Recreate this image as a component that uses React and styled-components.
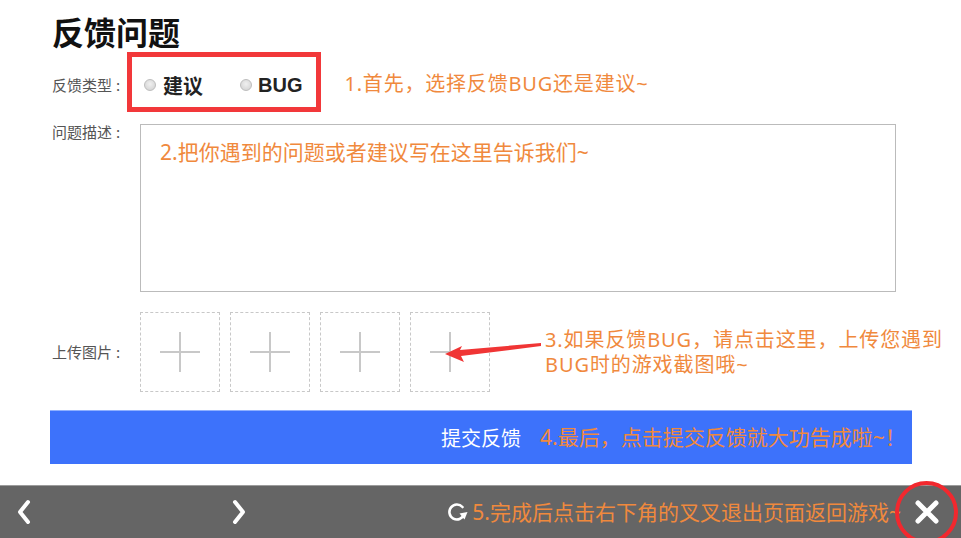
import React from 'react';
import styled, { createGlobalStyle } from 'styled-components';

const GlobalStyle = createGlobalStyle`
  body {
    margin: 0;
    background: #fff;
    font-family: "Noto Sans", "Noto Sans CJK SC", sans-serif;
  }
`;

const ORANGE = '#f0893d';

const Page = styled.div`
  width: 961px;
  height: 538px;
  display: flex;
  flex-direction: column;
  overflow: hidden;
`;

const Content = styled.div`
  padding: 13px 49px 0 52px;
  display: flex;
  flex-direction: column;
`;

const Title = styled.h1`
  margin: 0;
  font-size: 32px;
  line-height: 37px;
  font-weight: 700;
  color: #111;
  font-family: "Noto Sans CJK SC", sans-serif;
`;

const Row = styled.div`
  position: relative;
  display: flex;
  align-items: ${p => p.$align || 'center'};
  margin-top: ${p => p.$top}px;
`;

const Label = styled.div`
  width: ${p => p.$w || 88}px;
  flex-shrink: 0;
  font-size: 15px;
  line-height: 16px;
  color: #555;
  font-family: "Noto Sans CJK SC", sans-serif;
  padding-top: ${p => p.$pt || 0}px;
  white-space: nowrap;
`;

const Colon = styled.span`
  margin-left: 4px;
`;

const RedBox = styled.div`
  box-sizing: border-box;
  height: 60px;
  border: 5px solid #f2383a;
  padding: 6px 14px 0 12px;
  display: flex;
  align-items: center;
`;

const Radio = styled.span`
  box-sizing: border-box;
  width: 12px;
  height: 12px;
  border-radius: 50%;
  border: 1px solid #bdbdbd;
  background: radial-gradient(circle at 50% 40%, #f0f0f0, #cfcfcf);
  margin-right: ${p => p.$gap}px;
`;

const Choice = styled.span`
  font-size: 20px;
  font-weight: 700;
  color: #222;
  margin-right: ${p => p.$after || 0}px;
  font-family: ${p => (p.$latin ? '"Liberation Sans", Arial' : '"Noto Sans CJK SC"')}, sans-serif;
`;

const Note = styled.div`
  color: ${ORANGE};
  font-size: ${p => p.$size || 20}px;
  line-height: ${p => p.$lh || 24}px;
  letter-spacing: ${p => p.$ls || 0}px;
  font-family: "Noto Sans", "Noto Sans CJK SC", sans-serif;
  margin-left: ${p => p.$left || 0}px;
  padding-top: ${p => p.$pt || 0}px;
  white-space: nowrap;
`;

const TextBox = styled.div`
  box-sizing: border-box;
  width: 756px;
  height: 168px;
  border: 1px solid #bbb;
  padding: 15px 19px;
`;

const Uploads = styled.div`
  display: flex;
  gap: 10px;
`;

const UploadBox = styled.div`
  box-sizing: border-box;
  width: 80px;
  height: 80px;
  border: 1px dashed #c8c8c8;
  display: flex;
  align-items: center;
  justify-content: center;
`;

const Arrow = styled.svg`
  position: absolute;
  left: 393px;
  top: 30px;
`;

const SubmitBar = styled.div`
  position: relative;
  margin: 18px 0 0 -2px;
  width: 862px;
  height: 54px;
  background: #3d72fb;
  border-top: 1px solid #8fb0ff;
  box-sizing: border-box;
  display: flex;
  align-items: center;
  justify-content: center;
`;

const SubmitText = styled.span`
  color: #fff;
  font-size: 20px;
  font-family: "Noto Sans CJK SC", sans-serif;
`;

const SubmitNote = styled(Note)`
  position: absolute;
  left: 490px;
  top: 14px;
`;

const BottomBar = styled.div`
  margin-top: 21px;
  height: 53px;
  background: #656565;
  border-top: 1px solid #9c9c9c;
  box-sizing: border-box;
  display: flex;
  align-items: center;
  padding-left: 17px;
`;

const NavIcon = styled.svg`
  margin-left: ${p => p.$left || 0}px;
  flex-shrink: 0;
`;

const RightGroup = styled.div`
  margin-left: auto;
  display: flex;
  align-items: center;
`;

const CloseBtn = styled.div`
  box-sizing: border-box;
  width: 63px;
  height: 63px;
  border-radius: 50%;
  border: 4px solid #f2282e;
  display: flex;
  align-items: center;
  justify-content: center;
  margin: 0 3px 0 -6px;
  flex-shrink: 0;
`;

const Plus = () => (
  <svg width="40" height="40" viewBox="0 0 40 40">
    <path d="M0 20H40M20 0V40" stroke="#c8c8c8" strokeWidth="2" />
  </svg>
);

const App = () => {
  return (
    <Page>
      <GlobalStyle />
      <Content>
        <Title>反馈问题</Title>
        <Row $top={2}>
          <Label $w={75} $pt={6}>反馈类型<Colon>:</Colon></Label>
          <RedBox>
            <Radio $gap={7} />
            <Choice $after={37}>建议</Choice>
            <Radio $gap={6} />
            <Choice $latin>BUG</Choice>
          </RedBox>
          <Note $left={23} $pt={4} $ls={0.8}>1.首先，选择反馈BUG还是建议~</Note>
        </Row>
        <Row $top={12} $align="flex-start">
          <Label>问题描述<Colon>:</Colon></Label>
          <TextBox>
            <Note $size={21}>2.把你遇到的问题或者建议写在这里告诉我们~</Note>
          </TextBox>
        </Row>
        <Row $top={20}>
          <Label>上传图片<Colon>:</Colon></Label>
          <Uploads>
            {[0, 1, 2, 3].map(i => (
              <UploadBox key={i}>
                <Plus />
              </UploadBox>
            ))}
          </Uploads>
          <Note $size={20} $lh={25} $ls={0.9} $left={55}>
            3.如果反馈BUG，请点击这里，上传您遇到
            <br />
            BUG时的游戏截图哦~
          </Note>
          <Arrow width="97" height="22" viewBox="0 0 97 22">
            <polygon points="0,12 17,4 15,8 96,1 96,4 16,14 19,20" fill="#f03535" />
          </Arrow>
        </Row>
        <SubmitBar>
          <SubmitText>提交反馈</SubmitText>
          <SubmitNote $size={21}>4.最后，点击提交反馈就大功告成啦~！</SubmitNote>
        </SubmitBar>
      </Content>
      <BottomBar>
        <NavIcon width="14" height="26" viewBox="0 0 14 26">
          <path d="M11 3L3 13L11 23" fill="none" stroke="#fff" strokeWidth="4" strokeLinecap="round" strokeLinejoin="round" />
        </NavIcon>
        <NavIcon $left={201} width="14" height="26" viewBox="0 0 14 26">
          <path d="M3 3L11 13L3 23" fill="none" stroke="#fff" strokeWidth="4" strokeLinecap="round" strokeLinejoin="round" />
        </NavIcon>
        <RightGroup>
          <svg width="22" height="22" viewBox="0 0 22 22">
            <path d="M16.5 6A7.5 7.5 0 1 0 18 13.5" fill="none" stroke="#fff" strokeWidth="2.6" strokeLinecap="round" />
            <polygon points="13.5,12.5 21.5,11 18.5,18.5" fill="#fff" />
          </svg>
          <Note $size={21} $left={4}>5.完成后点击右下角的叉叉退出页面返回游戏~</Note>
          <CloseBtn>
            <svg width="26" height="26" viewBox="0 0 26 26">
              <path d="M4 4L22 22M22 4L4 22" stroke="#fff" strokeWidth="5" strokeLinecap="round" />
            </svg>
          </CloseBtn>
        </RightGroup>
      </BottomBar>
    </Page>
  );
};

export default App;
